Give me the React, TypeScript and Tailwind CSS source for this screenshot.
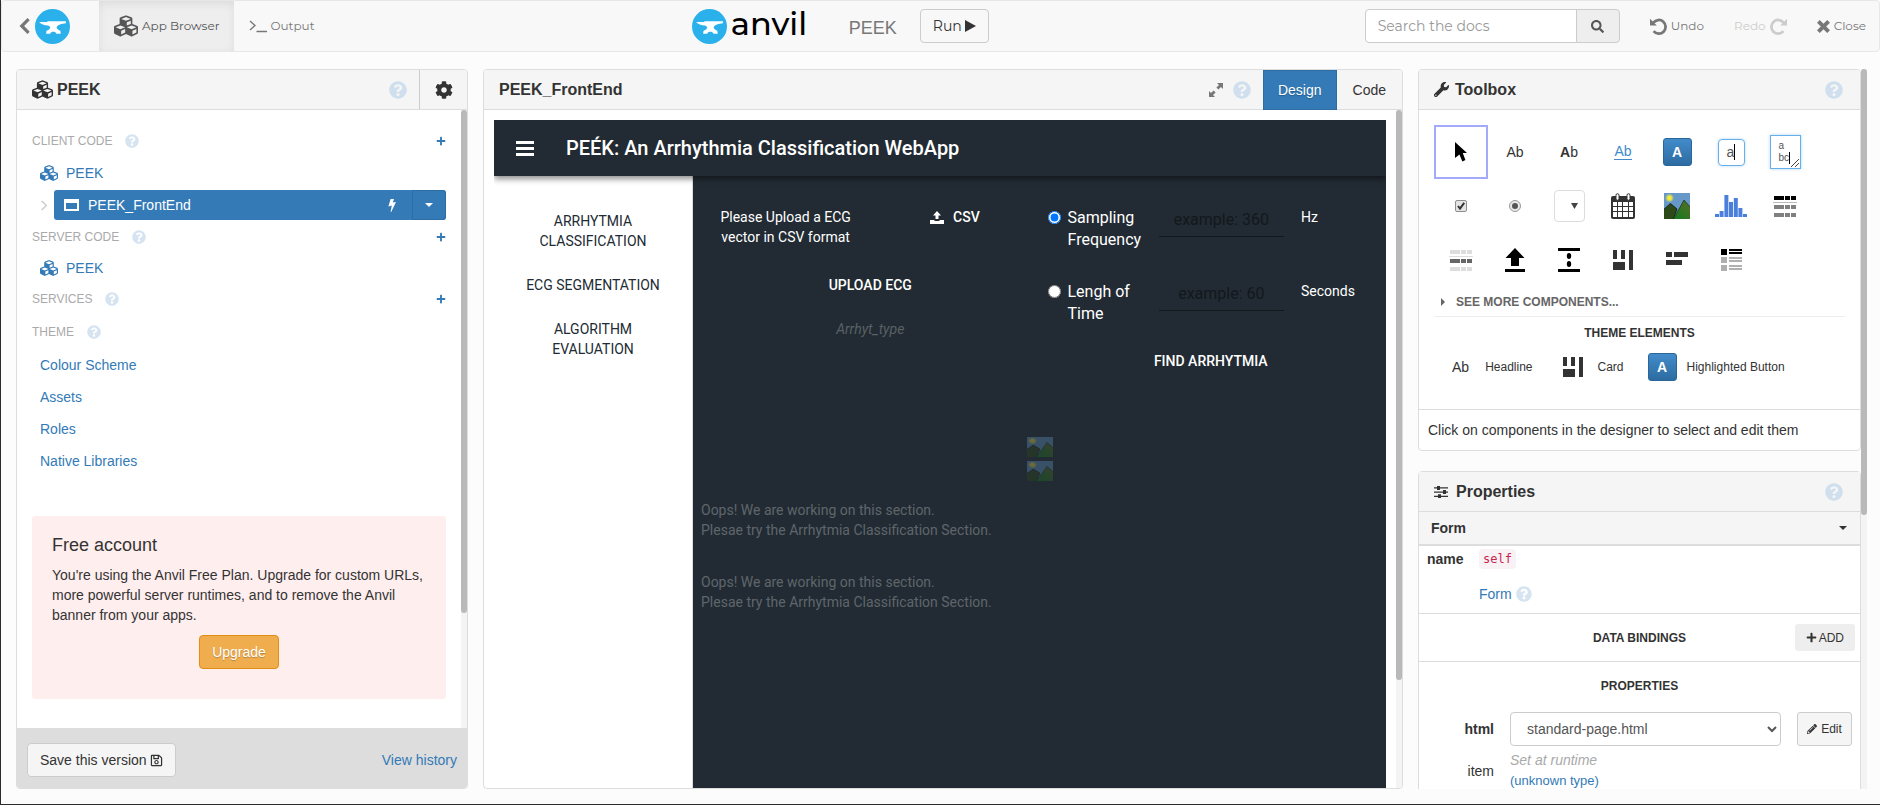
import type { ReactNode } from 'react';
import {
  FaCog,
  FaCubes,
  FaPencilAlt,
  FaPlus,
  FaQuestionCircle,
  FaRegSave,
  FaSearch,
  FaWrench,
} from 'react-icons/fa';

const LINK = 'text-[#337ab7]';

function AnvilMark() {
  return (
    <svg viewBox="0 0 34 34" className="size-[35px] shrink-0" aria-hidden="true">
      <circle cx="17" cy="17" r="17" fill="#2ab1eb" />
      <path
        fill="#fff"
        d="M4 12.6L12 12.6L12 11.8L30 11.8L30 13.8C26 14.2 21.6 15 21 18C21.4 19.6 23 20.6 24.6 21.2L25 24L20.8 24C20.4 22.6 19 22.2 17.8 22.2C16.4 22.2 15.2 22.6 14.8 24L10.8 24L11.2 21.2C13 20.6 14.6 19.6 14.8 18C14.6 17 13.6 16.2 12.4 16C9 15.8 6 14.6 4 12.6Z"
      />
    </svg>
  );
}

function TurnArrow({ className = '' }: { className?: string }) {
  return (
    <svg viewBox="0 0 16 16" className={`size-[17px] ${className}`} aria-hidden="true">
      <path d="M3.2 4.4A6.4 6.4 0 1 1 3.4 12.4" fill="none" stroke="currentColor" strokeWidth="2.6" />
      <path d="M0 0.8V7H6.4Z" fill="currentColor" />
    </svg>
  );
}

function Help({ className = 'size-[18px] text-[#cfdfed]' }: { className?: string }) {
  return (
    <button type="button" aria-label="Help" className="shrink-0">
      <FaQuestionCircle className={className} />
    </button>
  );
}

function ScrollTrack({ thumb }: { thumb: string }) {
  return (
    <div className="w-[6px] shrink-0 self-stretch bg-[#f4f4f4]">
      <div className={`rounded-[3px] bg-[#b9b9b9] ${thumb}`} />
    </div>
  );
}

function WindowIcon() {
  return (
    <svg viewBox="0 0 15 12" className="h-3 w-[15px]" aria-hidden="true">
      <path fill="#fff" fillRule="evenodd" d="M0 0H15V12H0ZM2 4V10H13V4Z" />
    </svg>
  );
}

function Caret({ className }: { className: string }) {
  return (
    <svg viewBox="0 0 8 4" className={`h-1 w-2 ${className}`} aria-hidden="true">
      <path fill="currentColor" d="M0 0H8L4 4Z" />
    </svg>
  );
}

function TopBar() {
  return (
    <header className="grid h-[52px] shrink-0 grid-cols-[692fr_294fr_893fr] rounded border border-[#e7e7e7] bg-[#f8f8f8] font-[Montserrat,Inter,sans-serif] text-xs text-[#777]">
      <div className="flex items-stretch">
        <a href="#apps" aria-label="Back to apps" className="flex w-[97px] items-center gap-[5px] pl-[17px]">
          <svg viewBox="0 0 11 16" className="h-4 w-[11px]" fill="none" stroke="currentColor" strokeWidth="3.2" aria-hidden="true">
            <path d="M9.6 1.2L2.8 8L9.6 14.8" />
          </svg>
          <AnvilMark />
        </a>
        <button
          type="button"
          className="flex items-center gap-1 bg-[#eee] px-[15px] text-[#555] shadow-[inset_0_3px_9px_rgba(0,0,0,0.075)]"
        >
          <FaCubes className="size-6" />
          App Browser
        </button>
        <button type="button" className="flex items-center gap-[3px] px-[15px]">
          <svg viewBox="0 0 18 14" className="h-[14px] w-[18px]" fill="none" stroke="currentColor" strokeWidth="1.4" aria-hidden="true">
            <path d="M1 2L6 6.5L1 11M7.5 12.5H18" />
          </svg>
          Output
        </button>
      </div>
      <div className="flex items-center whitespace-nowrap">
        <AnvilMark />
        <span className="w-[122px] pb-1 pl-1 text-[32px] leading-none font-medium text-black">anvil</span>
        <span className="w-[71px] pt-1 font-['Liberation_Sans',sans-serif] text-lg">PEEK</span>
        <button
          type="button"
          className="flex h-[34px] items-center gap-[3px] rounded border border-[#ccc] px-3 text-sm text-[#333]"
        >
          Run
          <svg viewBox="0 0 11 12" className="h-3 w-[11px]" aria-hidden="true">
            <path fill="currentColor" d="M0 0L11 6L0 12Z" />
          </svg>
        </button>
      </div>
      <div className="flex items-center justify-end pr-[13px]">
        <input
          type="text"
          aria-label="Search the docs"
          placeholder="Search the docs"
          className="h-[34px] w-[212px] rounded-l border border-[#ccc] bg-white px-3 text-sm placeholder:text-[#999]"
        />
        <button
          type="button"
          aria-label="Search"
          className="-ml-px flex h-[34px] w-11 items-center justify-center rounded-r border border-[#ccc] bg-[#eee] text-[#555]"
        >
          <FaSearch className="size-[13px]" />
        </button>
        <button type="button" className="ml-[30px] flex items-center gap-1">
          <TurnArrow />
          Undo
        </button>
        <button type="button" disabled className="ml-[30px] flex items-center gap-1 text-[#ccc]">
          Redo
          <TurnArrow className="-scale-x-100" />
        </button>
        <button type="button" className="ml-[30px] flex items-center gap-1">
          <svg viewBox="0 0 12 12" className="size-[13px]" stroke="currentColor" strokeWidth="3.6" aria-hidden="true">
            <path d="M1.3 1.3L10.7 10.7M10.7 1.3L1.3 10.7" />
          </svg>
          Close
        </button>
      </div>
    </header>
  );
}

function Section({ title, height, add = false }: { title: string; height: string; add?: boolean }) {
  return (
    <div className={`flex items-center text-xs text-[#aaa] ${height}`}>
      <span className="mr-[13px]">{title}</span>
      <Help className="size-[14px] text-[#d6e4f1]" />
      {add && (
        <button type="button" aria-label={`Add to ${title}`} className={`ml-auto ${LINK}`}>
          <FaPlus className="size-[10px]" />
        </button>
      )}
    </div>
  );
}

function ModuleRow() {
  return (
    <a href="#peek" className={`flex h-8 items-center gap-2 pl-2 ${LINK}`}>
      <FaCubes className="size-[18px]" />
      PEEK
    </a>
  );
}

function AppBrowser() {
  return (
    <section className="flex min-w-0 flex-col overflow-hidden rounded border border-[#ddd] bg-white">
      <div className="flex h-10 shrink-0 items-stretch border-b border-[#ddd] bg-[#f5f5f5]">
        <h2 className="flex flex-1 items-center gap-1 pl-[15px] text-base font-bold">
          <FaCubes className="size-[21px]" />
          PEEK
        </h2>
        <div className="flex items-center pr-3">
          <Help />
        </div>
        <button type="button" aria-label="Settings" className="flex w-12 items-center justify-center border-l border-[#ccc]">
          <FaCog className="size-[18px]" />
        </button>
      </div>
      <div className="flex min-h-0 flex-1">
        <div className="min-w-0 flex-1 overflow-hidden px-[15px] pt-[15px]">
          <Section title="CLIENT CODE" height="h-8" add />
          <ModuleRow />
          <div className="flex h-8 items-center pl-2">
            <svg viewBox="0 0 8 12" className="mr-[6px] h-[11px] w-2" fill="none" stroke="#ccc" strokeWidth="1.6" aria-hidden="true">
              <path d="M1.5 1L6.5 6L1.5 11" />
            </svg>
            <div className="flex h-[30px] flex-1 items-stretch rounded-[3px] bg-[#337ab7] text-white">
              <button type="button" className="flex flex-1 items-center gap-[9px] pl-[10px]">
                <WindowIcon />
                PEEK_FrontEnd
                <svg viewBox="0 0 8 13" className="mr-4 ml-auto h-[13px] w-2" aria-hidden="true">
                  <path fill="#fff" d="M2.6 0H6L4.8 3.6L8 3L3.2 13H2.6L3.8 6.6L0.4 7.4Z" />
                </svg>
              </button>
              <button
                type="button"
                aria-label="More"
                className="flex w-[34px] items-center justify-center rounded-r-[3px] border border-[#2e6da4]"
              >
                <Caret className="text-white" />
              </button>
            </div>
          </div>
          <Section title="SERVER CODE" height="h-[31px]" add />
          <ModuleRow />
          <Section title="SERVICES" height="h-[30px]" add />
          <Section title="THEME" height="h-[35px]" />
          {['Colour Scheme', 'Assets', 'Roles', 'Native Libraries'].map((name) => (
            <a key={name} href="#theme" className={`flex h-8 items-center pl-2 ${LINK}`}>
              {name}
            </a>
          ))}
          <div className="mt-[39px] flex h-[183px] flex-col items-center rounded-[3px] bg-[#ffeeee] px-5 pt-[19px]">
            <h3 className="self-start text-lg leading-5">Free account</h3>
            <p className="my-[10px] self-start leading-5">
              You're using the Anvil Free Plan. Upgrade for custom URLs, more powerful server runtimes, and to remove the
              Anvil banner from your apps.
            </p>
            <button
              type="button"
              className="h-[34px] rounded border border-[#e38d13] bg-[#f0ad4e] px-3 text-white [text-shadow:0_1px_1px_rgba(0,0,0,0.25)]"
            >
              Upgrade
            </button>
          </div>
        </div>
        <ScrollTrack thumb="h-[81.4%]" />
      </div>
      <footer className="flex h-[60px] shrink-0 items-center justify-between bg-[#ddd] px-[10px] pt-1">
        <button
          type="button"
          className="flex h-[34px] items-center gap-[3px] rounded border border-[#ccc] bg-[#f5f5f5] px-3"
        >
          Save this version
          <FaRegSave className="size-[13px]" />
        </button>
        <a href="#history" className={LINK}>
          View history
        </a>
      </footer>
    </section>
  );
}

function Landscape({ className }: { className: string }) {
  return (
    <svg viewBox="0 0 26 26" preserveAspectRatio="none" className={className} aria-hidden="true">
      <defs>
        <linearGradient id="hill" x1="0" y1="1" x2="1" y2="0">
          <stop offset="0" stopColor="#0a7d1c" />
          <stop offset="1" stopColor="#5f6b2a" />
        </linearGradient>
        <radialGradient id="sun">
          <stop offset="0.4" stopColor="#f1e93b" />
          <stop offset="1" stopColor="#f1e93b" stopOpacity="0" />
        </radialGradient>
      </defs>
      <rect width="26" height="26" fill="#6699c8" />
      <circle cx="5.5" cy="5" r="4.5" fill="url(#sun)" />
      <path d="M-1 17L6.5 10.5L13 16L9 27H-1Z" fill="#2c4a17" stroke="#111" strokeWidth="0.8" />
      <path d="M9 27L20 7L27 15V27Z" fill="url(#hill)" stroke="#1d3b12" strokeWidth="0.8" />
    </svg>
  );
}

function RateField({
  id,
  label,
  example,
  unit,
  checked,
}: {
  id: string;
  label: string;
  example: string;
  unit: string;
  checked?: boolean;
}) {
  return (
    <div className="grid h-[74px] grid-cols-[114fr_124fr_93fr] items-start">
      <div className="flex items-start gap-[7px] pr-3 pl-1">
        <input
          type="radio"
          id={id}
          name="rate"
          defaultChecked={checked}
          className="mt-1 size-[13px] shrink-0"
        />
        <label htmlFor={id} className="text-base leading-[22px]">
          {label}
        </label>
      </div>
      <input
        type="text"
        aria-label={label}
        placeholder={example}
        className="h-[30px] w-full border-b border-[#12181c] bg-transparent pb-1 text-center text-base placeholder:text-[#12181c]"
      />
      <span className="pl-[17px] leading-5">{unit}</span>
    </div>
  );
}

function Notice() {
  return (
    <p className="leading-5 text-[#5f666b]">
      Oops! We are working on this section.
      <br />
      Plesae try the Arrhytmia Classification Section.
    </p>
  );
}

function Designer() {
  return (
    <section className="flex min-w-0 flex-col overflow-hidden rounded border border-[#ddd] bg-white">
      <div className="flex h-10 shrink-0 items-center border-b border-[#ddd] bg-[#f5f5f5]">
        <h2 className="flex-1 pl-[15px] text-base font-bold">PEEK_FrontEnd</h2>
        <button type="button" aria-label="Expand" className="mr-[10px] text-[#777]">
          <svg viewBox="0 0 14 14" className="size-[14px]" aria-hidden="true">
            <path fill="currentColor" d="M8 0H14V6L12 4L9.4 6.6L7.4 4.6L10 2ZM6 14H0V8L2 10L4.6 7.4L6.6 9.4L4 12Z" />
          </svg>
        </button>
        <Help />
        <button
          type="button"
          className="ml-3 h-10 border border-[#2e6da4] bg-[#337ab7] px-[14px] text-white [text-shadow:0_1px_1px_rgba(0,0,0,0.25)]"
        >
          Design
        </button>
        <button type="button" className="h-10 px-4">
          Code
        </button>
      </div>
      <div className="flex min-h-0 flex-1">
        <div className="flex min-w-0 flex-1 px-[10px] pt-[10px] font-[Roboto,sans-serif]">
          <div className="flex min-w-0 flex-1 flex-col overflow-hidden">
            <div className="z-10 flex h-14 shrink-0 items-center bg-[#222b33] pl-[22px] text-white shadow-[0_3px_6px_rgba(0,0,0,0.45)]">
              <button type="button" aria-label="Menu" className="mr-8">
                <svg viewBox="0 0 18 15" className="h-[15px] w-[18px]" aria-hidden="true">
                  <path fill="#fff" d="M0 0H18V3H0ZM0 6H18V9H0ZM0 12H18V15H0Z" />
                </svg>
              </button>
              <h1 className="text-xl font-medium">PEÉK: An Arrhythmia Classification WebApp</h1>
            </div>
            <div className="flex min-h-0 flex-1">
              <nav className="flex w-[199px] shrink-0 flex-col items-center gap-6 border-r border-[#ddd] px-10 pt-[35px] text-center leading-5 text-[#222b33]">
                <a href="#classification">ARRHYTMIA CLASSIFICATION</a>
                <a href="#segmentation" className="whitespace-nowrap">
                  ECG SEGMENTATION
                </a>
                <a href="#evaluation">ALGORITHM EVALUATION</a>
              </nav>
              <div className="flex min-w-0 flex-1 flex-col bg-[#222b33] px-2 pt-[31px] text-white">
                <div className="grid h-[230px] grid-cols-2 gap-2">
                  <div className="flex flex-col items-center pl-1">
                    <div className="grid w-full grid-cols-2 gap-2">
                      <p className="text-center leading-5">
                        Please Upload a ECG
                        <br />
                        vector in CSV format
                      </p>
                      <button type="button" className="flex h-5 items-center justify-center gap-[9px] font-medium">
                        <svg viewBox="0 0 14 13" className="h-[13px] w-[14px]" aria-hidden="true">
                          <path fill="#fff" d="M7 0L11 4.5H8.5V8H5.5V4.5H3ZM0 9H4.5V10H9.5V9H14V13H0Z" />
                        </svg>
                        CSV
                      </button>
                    </div>
                    <button type="button" className="mt-[28px] leading-5 font-medium">
                      UPLOAD ECG
                    </button>
                    <p className="mt-6 leading-5 text-[#596065] italic">Arrhyt_type</p>
                  </div>
                  <div className="flex flex-col">
                    <RateField id="sampling" label="Sampling Frequency" example="example: 360" unit="Hz" checked />
                    <RateField id="length" label="Lengh of Time" example="example: 60" unit="Seconds" />
                    <button type="button" className="-mt-1 self-center font-medium">
                      FIND ARRHYTMIA
                    </button>
                  </div>
                </div>
                <div className="flex flex-col items-center gap-1 opacity-35">
                  <Landscape className="h-5 w-[26px]" />
                  <Landscape className="h-5 w-[26px]" />
                </div>
                <div className="mt-[19px] flex flex-col gap-8">
                  <Notice />
                  <Notice />
                </div>
              </div>
            </div>
          </div>
        </div>
        <ScrollTrack thumb="h-[84%]" />
      </div>
    </section>
  );
}

function ButtonGlyph() {
  return (
    <span className="flex h-7 w-[29px] items-center justify-center rounded-[3px] border border-[#2b669a] bg-linear-to-b from-[#428bca] to-[#2d6ca2] text-sm font-bold text-white">
      A
    </span>
  );
}

function CardGlyph() {
  return (
    <svg viewBox="0 0 20 20" className="size-5" aria-hidden="true">
      <path fill="#333" d="M0 0H4V9H0ZM8 0H12V9H8ZM16 0H20V20H16ZM0 12H12V20H0Z" />
    </svg>
  );
}

const TOOLS: { name: string; glyph: ReactNode }[] = [
  {
    name: 'Pointer',
    glyph: (
      <svg viewBox="0 0 12 20" className="h-5 w-3">
        <path d="M0 0L12 11H7.8L10.4 18L7.4 19.5L4.4 12.6L0 16Z" />
      </svg>
    ),
  },
  { name: 'Label', glyph: <span>Ab</span> },
  {
    name: 'Rich text',
    glyph: (
      <span>
        <b>A</b>b
      </span>
    ),
  },
  { name: 'Link', glyph: <span className="border-b border-[#428bca] leading-[15px] text-[#428bca]">Ab</span> },
  { name: 'Button', glyph: <ButtonGlyph /> },
  {
    name: 'Text box',
    glyph: (
      <span className="flex size-[27px] items-center justify-center rounded border border-[#66afe9] text-[#555] shadow-[0_0_3px_rgba(102,175,233,0.5)]">
        <span className="border-r border-black leading-4">a</span>
      </span>
    ),
  },
  {
    name: 'Text area',
    glyph: (
      <span className="relative flex h-[34px] w-[31px] flex-col items-start justify-center border border-[#66afe9] pl-2 text-[10px] leading-[12px] text-[#555] shadow-[0_0_3px_rgba(102,175,233,0.5)]">
        <span>a</span>
        <span className="border-r border-black">bc</span>
        <svg viewBox="0 0 8 8" className="absolute right-px bottom-px size-2" stroke="#444">
          <path d="M0 8L8 0M4 8L8 4" />
        </svg>
      </span>
    ),
  },
  {
    name: 'Check box',
    glyph: (
      <svg viewBox="0 0 12 12" className="size-3">
        <rect x="0.5" y="0.5" width="11" height="11" rx="1.5" fill="#e4e4e4" stroke="#8e8e8e" />
        <path d="M3 6L5 8.6L9.2 2.8" fill="none" stroke="#333" strokeWidth="2" />
      </svg>
    ),
  },
  {
    name: 'Radio button',
    glyph: (
      <svg viewBox="0 0 12 12" className="size-3">
        <circle cx="6" cy="6" r="5.5" fill="#e8e8e8" stroke="#999" />
        <circle cx="6" cy="6" r="3" fill="#555" />
      </svg>
    ),
  },
  {
    name: 'Drop down',
    glyph: (
      <span className="flex h-8 w-[31px] items-center justify-end rounded border border-[#ddd] pr-[6px]">
        <svg viewBox="0 0 7 6" className="h-[6px] w-[7px]">
          <path fill="#444" d="M0 0H7L3.5 6Z" />
        </svg>
      </span>
    ),
  },
  {
    name: 'Date picker',
    glyph: (
      <svg viewBox="0 0 24 26" className="h-[26px] w-6">
        <rect y="3" width="24" height="23" rx="2" fill="#333" />
        <path fill="#fff" d="M2 9H6V13H2ZM7 9H11V13H7ZM12 9H17V13H12ZM18 9H22V13H18ZM2 14H6V18H2ZM7 14H11V18H7ZM12 14H17V18H12ZM18 14H22V18H18ZM2 19H6V24H2ZM7 19H11V24H7ZM12 19H17V24H12ZM18 19H22V24H18Z" />
        <rect x="5" y="0.7" width="3" height="6.5" rx="1.5" fill="#fff" stroke="#333" />
        <rect x="16" y="0.7" width="3" height="6.5" rx="1.5" fill="#fff" stroke="#333" />
      </svg>
    ),
  },
  { name: 'Image', glyph: <Landscape className="size-[26px]" /> },
  {
    name: 'Plot',
    glyph: (
      <svg viewBox="0 0 32 22" className="h-[22px] w-8">
        <path
          fill="#4a80dc"
          d="M0 19H4V22H0ZM4.6 16H8.6V22H4.6ZM9.4 0H13.4V22H9.4ZM14 7H18V22H14ZM18.8 3H22.8V22H18.8ZM23.4 13H27.4V22H23.4ZM28 19H32V22H28Z"
        />
      </svg>
    ),
  },
  {
    name: 'Data grid',
    glyph: (
      <svg viewBox="0 0 24 21" className="h-[21px] w-6">
        <path d="M1 0H11V4H1ZM12 0H17V4H12ZM18 0H23V4H18Z" />
        <path fill="#bbb" d="M0 6H24V7H0Z" />
        <path fill="#808080" d="M1 9H11V13H1ZM12 9H17V13H12ZM18 9H23V13H18ZM1 17H11V21H1ZM12 17H17V21H12ZM18 17H23V21H18Z" />
      </svg>
    ),
  },
  {
    name: 'Data row',
    glyph: (
      <svg viewBox="0 0 24 21" className="h-[21px] w-6">
        <path fill="#ddd" d="M1 0H11V4H1ZM12 0H17V4H12ZM18 0H23V4H18ZM0 6H24V7H0ZM1 17H11V21H1ZM12 17H17V21H12ZM18 17H23V21H18Z" />
        <path fill="#666" d="M1 9H11V13H1ZM12 9H17V13H12ZM18 9H23V13H18Z" />
      </svg>
    ),
  },
  {
    name: 'File loader',
    glyph: (
      <svg viewBox="0 0 20 24" className="h-6 w-5">
        <path d="M10 0L19.5 10H14V18H6V10H0.5ZM0 21H20V24H0Z" />
      </svg>
    ),
  },
  {
    name: 'Spacer',
    glyph: (
      <svg viewBox="0 0 22 24" className="h-6 w-[22px]">
        <path d="M0 0H22V3H0ZM0 21H22V24H0Z" />
        <ellipse cx="11" cy="8" rx="2.2" ry="3" />
        <ellipse cx="11" cy="16" rx="2.2" ry="3" />
      </svg>
    ),
  },
  { name: 'Column panel', glyph: <CardGlyph /> },
  {
    name: 'Flow panel',
    glyph: (
      <svg viewBox="0 0 22 20" className="h-5 w-[22px]">
        <path fill="#333" d="M0 2H6V7H0ZM8 2H22V7H8ZM0 10H16V15H0Z" />
      </svg>
    ),
  },
  {
    name: 'Repeating panel',
    glyph: (
      <svg viewBox="0 0 21 22" className="h-[22px] w-[21px]">
        <path d="M0 0H6V6H0ZM8 0H21V2H8ZM8 3H21V5H8Z" />
        <path fill="#b0b0b0" d="M0 8H6V14H0ZM8 8H21V10H8ZM8 11H21V13H8ZM0 16H6V22H0ZM8 16H21V18H8ZM8 19H21V21H8Z" />
      </svg>
    ),
  },
];

function Toolbox() {
  return (
    <section className="shrink-0 overflow-hidden rounded border border-[#ddd] bg-white">
      <div className="flex h-10 items-center border-b border-[#ddd] bg-[#f5f5f5] pr-[17px] pl-[15px]">
        <h2 className="flex flex-1 items-center gap-[6px] text-base font-bold">
          <FaWrench className="size-[15px]" />
          Toolbox
        </h2>
        <Help />
      </div>
      <div className="px-[15px] pt-[15px] pb-5">
        <div className="flex flex-wrap pr-[10px]">
          {TOOLS.map((tool, i) => (
            <button
              key={tool.name}
              type="button"
              aria-label={tool.name}
              className={`flex size-[54px] items-center justify-center text-sm text-[#333] ${
                i === 0 ? 'border-2 border-[#a3a9fb]' : ''
              }`}
            >
              {tool.glyph}
            </button>
          ))}
        </div>
        <button
          type="button"
          className="flex h-[30px] w-full items-center gap-[11px] border-b border-[#eee] pl-[7px] text-xs font-bold text-[#666]"
        >
          <svg viewBox="0 0 4 8" className="h-2 w-1" aria-hidden="true">
            <path fill="currentColor" d="M0 0L4 4L0 8Z" />
          </svg>
          SEE MORE COMPONENTS...
        </button>
        <h3 className="mt-2 text-center text-xs font-bold">THEME ELEMENTS</h3>
        <div className="mt-3 flex items-center gap-6 pl-[18px] text-xs">
          <button type="button" className="flex items-center gap-4">
            <span className="text-sm">Ab</span>
            Headline
          </button>
          <button type="button" className="ml-[6px] flex items-center gap-[15px]">
            <CardGlyph />
            Card
          </button>
          <button type="button" className="flex items-center gap-[10px]">
            <ButtonGlyph />
            Highlighted Button
          </button>
        </div>
      </div>
      <p className="mt-2 border-t border-[#ddd] px-[9px] py-[10px] leading-5">
        Click on components in the designer to select and edit them
      </p>
    </section>
  );
}

function Properties() {
  return (
    <section className="shrink-0 rounded-t border border-[#ddd] bg-white">
      <div className="flex h-10 items-center border-b border-[#ddd] bg-[#f5f5f5] pr-[17px] pl-[15px]">
        <h2 className="flex flex-1 items-center gap-2 text-base font-bold">
          <svg viewBox="0 0 14 12" className="h-3 w-[14px]" fill="#333" aria-hidden="true">
            <path d="M0 1.3H14V2.5H0ZM0 5.5H14V6.7H0ZM0 9.7H14V10.9H0Z" />
            <path d="M3 0H6V4H3ZM9 4H12V8H9ZM4 8.3H7V12H4Z" />
          </svg>
          Properties
        </h2>
        <Help />
      </div>
      <button
        type="button"
        className="flex h-[34px] w-full items-center justify-between border-b-2 border-[#ddd] bg-[#f5f5f5] pr-[13px] pl-3 font-bold"
      >
        Form
        <Caret className="text-[#333]" />
      </button>
      <div className="grid grid-cols-[52px_1fr] items-center gap-y-[15px] border-b border-[#ddd] pt-[3px] pb-[9px] pl-2">
        <span className="font-bold">name</span>
        <code className="justify-self-start rounded bg-[#f9f2f4] px-1 font-['DejaVu_Sans_Mono',monospace] text-xs leading-5 text-[#c7254e]">
          self
        </code>
        <a href="#form" className={`col-start-2 flex items-center gap-1 ${LINK}`}>
          Form
          <FaQuestionCircle className="size-4 text-[#d6e4f1]" />
        </a>
      </div>
      <div className="grid h-12 grid-cols-[1fr_auto_1fr] items-center border-b border-[#ddd] px-[5px] text-xs font-bold">
        <h3 className="col-start-2">DATA BINDINGS</h3>
        <button
          type="button"
          className="flex h-[27px] items-center gap-[2px] justify-self-end rounded-[3px] bg-[#eee] px-[11px] font-normal"
        >
          <FaPlus className="size-[11px]" />
          ADD
        </button>
      </div>
      <h3 className="flex h-[48px] items-center justify-center text-xs font-bold">PROPERTIES</h3>
      <div className="mt-[2px] grid grid-cols-[75px_1fr_55px] items-center gap-x-4 pr-2">
        <label htmlFor="html" className="text-right font-bold">
          html
        </label>
        <select
          id="html"
          className="h-[34px] min-w-0 rounded border border-[#ccc] bg-white px-3 text-[#555]"
          defaultValue="standard-page.html"
        >
          <option>standard-page.html</option>
        </select>
        <button
          type="button"
          className="flex h-[34px] items-center justify-center gap-1 rounded-[3px] border border-[#ccc] bg-[#f5f5f5] text-xs"
        >
          <FaPencilAlt className="size-[10px]" />
          Edit
        </button>
      </div>
      <div className="grid grid-cols-[75px_1fr] items-center gap-x-4 pt-1 pb-4">
        <span className="text-right">item</span>
        <span className="leading-5">
          <span className="text-[#aaa] italic">Set at runtime</span>
          <br />
          <a href="#type" className={`text-[13px] ${LINK}`}>
            (unknown type)
          </a>
        </span>
      </div>
    </section>
  );
}

export default function App() {
  return (
    <div className="flex h-screen flex-col overflow-hidden border-b border-l border-[#2b2b2b] bg-[#fcfcfc] font-['Liberation_Sans',Arial,sans-serif] text-sm text-[#333]">
      <TopBar />
      <main className="grid min-h-0 flex-1 grid-cols-[452fr_920fr_449fr] grid-rows-[minmax(0,1fr)] gap-[15px] pt-[17px] pr-[13px] pb-[15px] pl-[15px]">
        <AppBrowser />
        <Designer />
        <aside className="flex min-w-0">
          <div className="flex min-w-0 flex-1 flex-col gap-5 overflow-hidden">
            <Toolbox />
            <Properties />
          </div>
          <ScrollTrack thumb="h-[62%]" />
        </aside>
      </main>
    </div>
  );
}
